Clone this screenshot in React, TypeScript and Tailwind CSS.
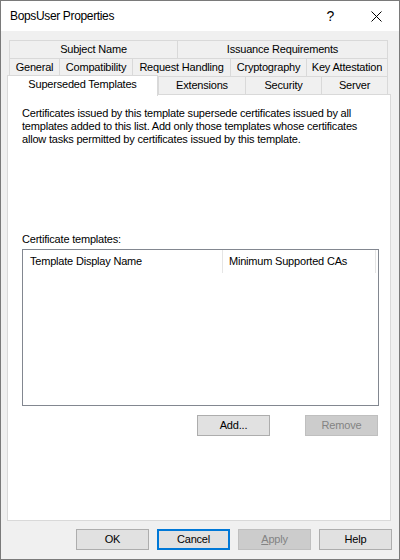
import React from 'react';

interface Tab {
    label: string;
    width: string;
}

const topRow: Tab[] = [
    { label: 'Subject Name', width: 'w-[168px]' },
    { label: 'Issuance Requirements', width: 'w-[211px] border-r' },
];

const middleRow: Tab[] = [
    { label: 'General', width: 'w-[50px]' },
    { label: 'Compatibility', width: 'w-[73px]' },
    { label: 'Request Handling', width: 'w-[98px]' },
    { label: 'Cryptography', width: 'w-[76px]' },
    { label: 'Key Attestation', width: 'w-[82px] border-r' },
];

const frontRow: Tab[] = [
    { label: 'Extensions', width: 'w-[87px]' },
    { label: 'Security', width: 'w-[76px]' },
    { label: 'Server', width: 'w-[67px] border-r' },
];

const TabCell: React.FC<{ tab: Tab }> = ({ tab }) => (
    <div
        className={`${tab.width} h-[18px] flex items-center justify-center border-t border-l border-[#d9d9d9] bg-[#f0f0f0] whitespace-nowrap`}
    >
        {tab.label}
    </div>
);

const DialogButton: React.FC<{
    children: React.ReactNode;
    disabled?: boolean;
    isDefault?: boolean;
}> = ({ children, disabled, isDefault }) => {
    let look = 'bg-[#e1e1e1] border border-[#adadad] text-black';
    if (disabled) look = 'bg-[#cccccc] border border-[#bfbfbf] text-[#838383]';
    if (isDefault) look = 'bg-[#e1e1e1] border-2 border-[#0078d7] text-black';
    return (
        <button
            disabled={disabled}
            className={`w-[73px] h-[21px] flex items-center justify-center ${look}`}
        >
            {children}
        </button>
    );
};

const App: React.FC = () => {
    return (
        <div
            className="w-[400px] h-[560px] bg-[#f0f0f0] border border-[#7a7a7a] flex flex-col text-[11px] leading-[13px] tracking-[-0.2px] text-black"
            style={{ fontFamily: '"Liberation Sans", Arial, sans-serif' }}
        >
            {/* title bar */}
            <div className="h-[30px] bg-white flex items-center shrink-0">
                <span className="pl-[9px] text-[12px] tracking-[-0.35px]">BopsUser Properties</span>
                <span className="ml-auto mr-[37px] text-[14px]">?</span>
                <svg width="11" height="11" viewBox="0 0 11 11" className="mr-[17px]">
                    <path d="M0.5 0.5 L10.5 10.5 M10.5 0.5 L0.5 10.5" stroke="#000" strokeWidth="1" />
                </svg>
            </div>

            <div className="pl-[6px] pt-[9px] flex flex-col">
                {/* back rows of tabs */}
                <div className="flex ml-[2px]">
                    {topRow.map((t) => (
                        <TabCell key={t.label} tab={t} />
                    ))}
                </div>
                <div className="flex ml-[2px]">
                    {middleRow.map((t) => (
                        <TabCell key={t.label} tab={t} />
                    ))}
                </div>
                <div className="flex items-end h-[19px] -mt-px">
                    <div className="relative z-10 w-[151px] h-[21px] -mb-[2px] bg-white border-t border-l border-r border-[#d9d9d9] flex justify-center pt-[2px]">
                        Superseded Templates
                    </div>
                    {frontRow.map((t) => (
                        <TabCell key={t.label} tab={t} />
                    ))}
                </div>

                {/* page body */}
                <div className="w-[384px] h-[427px] bg-white border border-[#d9d9d9] pl-[14px] pt-[12px]">
                    <p className="w-[350px]">
                        Certificates issued by this template supersede certificates issued by all
                        templates added to this list. Add only those templates whose certificates
                        allow tasks permitted by certificates issued by this template.
                    </p>

                    <p className="mt-[87px]">Certificate templates:</p>

                    <div className="mt-[3px] w-[357px] h-[157px] border border-[#828790] bg-white">
                        <div className="flex h-[23px]">
                            <div className="w-[200px] pl-[7px] flex items-center border-r border-[#e5e5e5]">
                                Template Display Name
                            </div>
                            <div className="w-[153px] pl-[6px] flex items-center border-r border-[#e5e5e5]">
                                Minimum Supported CAs
                            </div>
                        </div>
                    </div>

                    <div className="w-[356px] mt-[9px] flex justify-end gap-[35px]">
                        <DialogButton>Add...</DialogButton>
                        <DialogButton disabled>Remove</DialogButton>
                    </div>
                </div>
            </div>

            {/* dialog buttons */}
            <div className="mt-[8px] pr-[7px] flex justify-end gap-[8px]">
                <DialogButton>OK</DialogButton>
                <DialogButton isDefault>Cancel</DialogButton>
                <DialogButton disabled>
                    <span>
                        <span className="underline">A</span>pply
                    </span>
                </DialogButton>
                <DialogButton>Help</DialogButton>
            </div>
        </div>
    );
};

export default App;
